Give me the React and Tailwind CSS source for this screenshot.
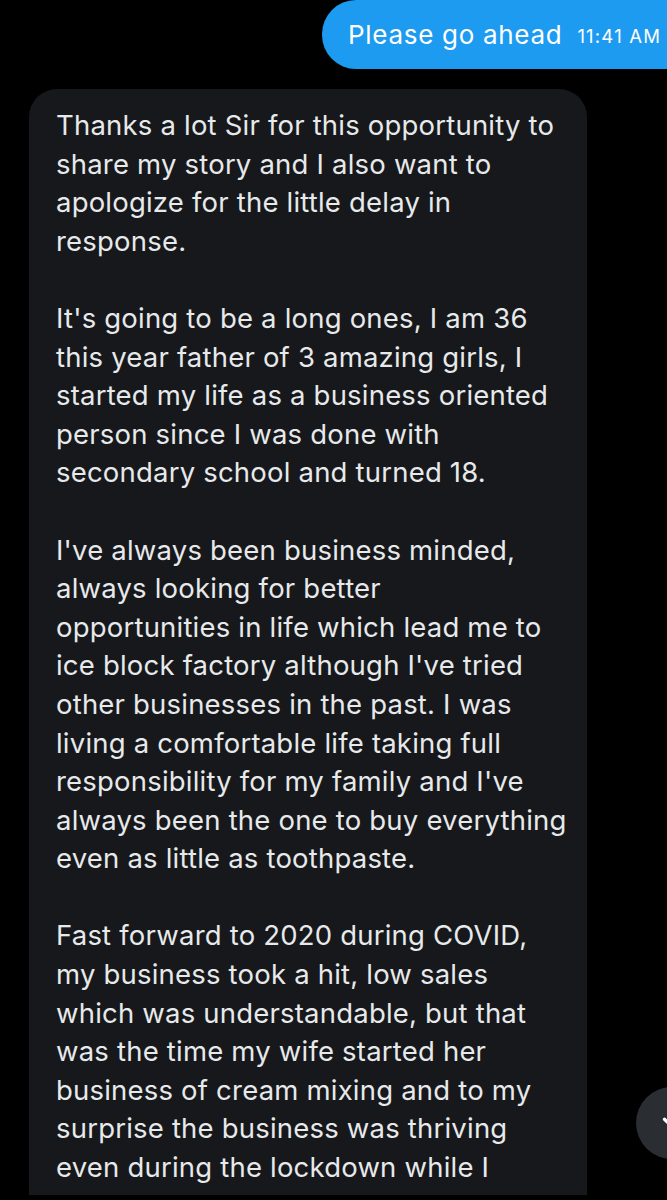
import { ChevronDown } from 'lucide-react';

const paragraphs = [
  [
    'Thanks a lot Sir for this opportunity to',
    'share my story and I also want to',
    'apologize for the little delay in',
    'response.',
  ],
  [
    "It's going to be a long ones, I am 36",
    'this year father of 3 amazing girls, I',
    'started my life as a business oriented',
    'person since I was done with',
    'secondary school and turned 18.',
  ],
  [
    "I've always been business minded,",
    'always looking for better',
    'opportunities in life which lead me to',
    "ice block factory although I've tried",
    'other businesses in the past. I was',
    'living a comfortable life taking full',
    "responsibility for my family and I've",
    'always been the one to buy everything',
    'even as little as toothpaste.',
  ],
  [
    'Fast forward to 2020 during COVID,',
    'my business took a hit, low sales',
    'which was understandable, but that',
    'was the time my wife started her',
    'business of cream mixing and to my',
    'surprise the business was thriving',
    'even during the lockdown while I',
    'kept on struggling with the little sales',
  ],
];

export default function App() {
  return (
    <div
      className="relative h-[1200px] w-[667px] overflow-hidden bg-black"
      style={{ fontFamily: 'Inter, "Noto Sans", sans-serif' }}
    >
      <div className="flex justify-end">
        <div className="-mr-8 flex h-[69px] w-[377px] items-center gap-[15px] rounded-l-[34px] bg-[#1d9bf0] pl-[26px] text-white">
          <span className="text-[26px] tracking-[0.7px]">Please go ahead</span>
          <span className="mt-1 text-[18.5px] tracking-[1.2px]">11:41 AM</span>
        </div>
      </div>

      <div className="ml-[29px] mt-[20px] h-[1106px] w-[558px] overflow-hidden rounded-t-[28px] bg-[#16181c] pl-[27px] pt-[17px] text-[27.5px] leading-[38.6px] tracking-[0.2px] text-[#e7e9ea]">
        {paragraphs.map((lines, i) => (
          <div key={i} className={i > 0 ? 'mt-[38.6px]' : ''}>
            {lines.map((line) => (
              <div key={line} className="whitespace-nowrap">
                {line}
              </div>
            ))}
          </div>
        ))}
      </div>

      <div className="absolute right-[-41px] top-[1087px] flex h-[72px] w-[72px] items-center justify-center rounded-full bg-[#2a2d32]">
        <ChevronDown size={30} strokeWidth={2.6} className="text-white" />
      </div>
    </div>
  );
}
